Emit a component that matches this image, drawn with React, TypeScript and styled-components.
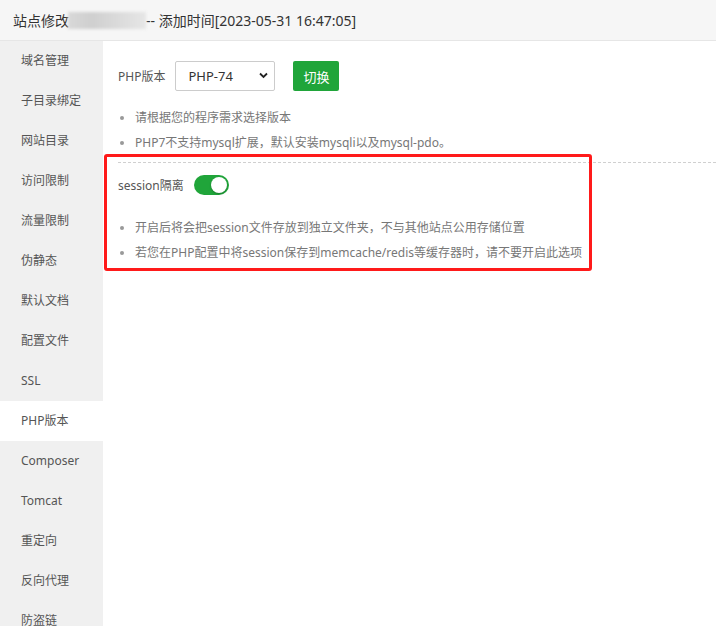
import React from "react";
import styled, { createGlobalStyle } from "styled-components";

const Global = createGlobalStyle`
  html, body { margin: 0; padding: 0; background: #fff; }
  body { font-family: "Noto Sans", "Noto Sans CJK SC", sans-serif; color: #333; }
  * { box-sizing: border-box; }
`;

const Page = styled.div`
  position: relative;
  width: 716px;
  height: 626px;
  overflow: hidden;
  background: #fff;
`;

const Header = styled.div`
  height: 41px;
  display: flex;
  align-items: center;
  padding-left: 13px;
  background: #f6f6f6;
  border-bottom: 1px solid #e6e6e6;
  font-size: 14px;
  color: #333;
  white-space: nowrap;
`;

const Blur = styled.span`
  display: inline-block;
  width: 78px;
  height: 17px;
  margin: 0 0 0 -1px;
  background: linear-gradient(90deg, #d8d8d8, #cfcfcf 30%, #d9d9d9 60%, #e6e6e6);
  filter: blur(1.5px);
`;

const Body = styled.div`
  display: flex;
  height: calc(100% - 41px);
`;

const Sidebar = styled.div`
  width: 103px;
  flex: none;
  background: #f0f0f0;
`;

const NavItem = styled.div<{ $active?: boolean }>`
  height: 40px;
  line-height: 40px;
  padding-left: 21px;
  font-size: 12px;
  color: #555;
  background: ${(p) => (p.$active ? "#fff" : "transparent")};
`;

const Main = styled.div`
  flex: 1;
  padding: 20px 0 0 15px;
`;

const Row = styled.div`
  display: flex;
  align-items: center;
  height: 30px;
`;

const Label = styled.span<{ $gap: number }>`
  font-size: 12px;
  color: #555;
  margin-right: ${(p) => p.$gap}px;
`;

const SelectWrap = styled.div`
  position: relative;
  width: 100px;
  height: 30px;
  margin-right: 18px;
`;

const Select = styled.select`
  appearance: none;
  width: 100%;
  height: 100%;
  border: 1px solid #ccc;
  border-radius: 2px;
  background: #fff;
  padding: 0 0 0 12px;
  font-family: "Noto Sans", "Noto Sans CJK SC", sans-serif;
  font-size: 13px;
  color: #333;
  outline: none;
`;

const Chevron = styled.svg`
  position: absolute;
  right: 7px;
  top: 11px;
  pointer-events: none;
`;

const Button = styled.button`
  width: 46px;
  height: 30px;
  border: none;
  border-radius: 2px;
  background: #20a53a;
  color: #fff;
  font-family: "Noto Sans", "Noto Sans CJK SC", sans-serif;
  font-size: 13px;
  padding: 0;
`;

const Tips = styled.ul<{ $top: number }>`
  list-style: none;
  margin: ${(p) => p.$top}px 0 0 0;
  padding: 0;
`;

const Tip = styled.li`
  position: relative;
  height: 25px;
  line-height: 25px;
  padding-left: 17px;
  font-size: 12px;
  color: #777;
  white-space: nowrap;
  &::before {
    content: "";
    position: absolute;
    left: 2px;
    top: 11px;
    width: 4px;
    height: 4px;
    border-radius: 50%;
    background: #999;
  }
`;

const Divider = styled.div`
  margin-top: 7px;
  border-top: 1px dashed #d0d0d0;
`;

const SessionRow = styled.div`
  display: flex;
  align-items: center;
  height: 20px;
  margin-top: 12px;
`;

const Toggle = styled.div`
  position: relative;
  width: 35px;
  height: 20px;
  border-radius: 10px;
  background: #20a53a;
  &::after {
    content: "";
    position: absolute;
    right: 2px;
    top: 2px;
    width: 16px;
    height: 16px;
    border-radius: 50%;
    background: #fff;
    box-shadow: 0 1px 2px rgba(0, 0, 0, 0.25);
  }
`;

const Highlight = styled.div`
  position: absolute;
  left: 104px;
  top: 154px;
  width: 488px;
  height: 117px;
  border: 3px solid #ff1a1a;
  border-radius: 3px;
  pointer-events: none;
`;

const nav = [
  "域名管理",
  "子目录绑定",
  "网站目录",
  "访问限制",
  "流量限制",
  "伪静态",
  "默认文档",
  "配置文件",
  "SSL",
  "PHP版本",
  "Composer",
  "Tomcat",
  "重定向",
  "反向代理",
  "防盗链",
];

export default function App() {
  return (
    <Page>
      <Global />
      <Header>
        站点修改<Blur />-- 添加时间[2023-05-31 16:47:05]
      </Header>
      <Body>
        <Sidebar>
          {nav.map((n) => (
            <NavItem key={n} $active={n === "PHP版本"}>
              {n}
            </NavItem>
          ))}
        </Sidebar>
        <Main>
          <Row>
            <Label $gap={10}>PHP版本</Label>
            <SelectWrap>
              <Select defaultValue="74">
                <option value="74">PHP-74</option>
              </Select>
              <Chevron width="9" height="7" viewBox="0 0 9 7">
                <path d="M1 1.5 L4.5 5 L8 1.5" fill="none" stroke="#222" strokeWidth="1.8" />
              </Chevron>
            </SelectWrap>
            <Button>切换</Button>
          </Row>
          <Tips $top={14}>
            <Tip>请根据您的程序需求选择版本</Tip>
            <Tip>PHP7不支持mysql扩展，默认安装mysqli以及mysql-pdo。</Tip>
          </Tips>
          <Divider />
          <SessionRow>
            <Label $gap={10}>session隔离</Label>
            <Toggle />
          </SessionRow>
          <Tips $top={20}>
            <Tip>开启后将会把session文件存放到独立文件夹，不与其他站点公用存储位置</Tip>
            <Tip>若您在PHP配置中将session保存到memcache/redis等缓存器时，请不要开启此选项</Tip>
          </Tips>
        </Main>
      </Body>
      <Highlight />
    </Page>
  );
}
